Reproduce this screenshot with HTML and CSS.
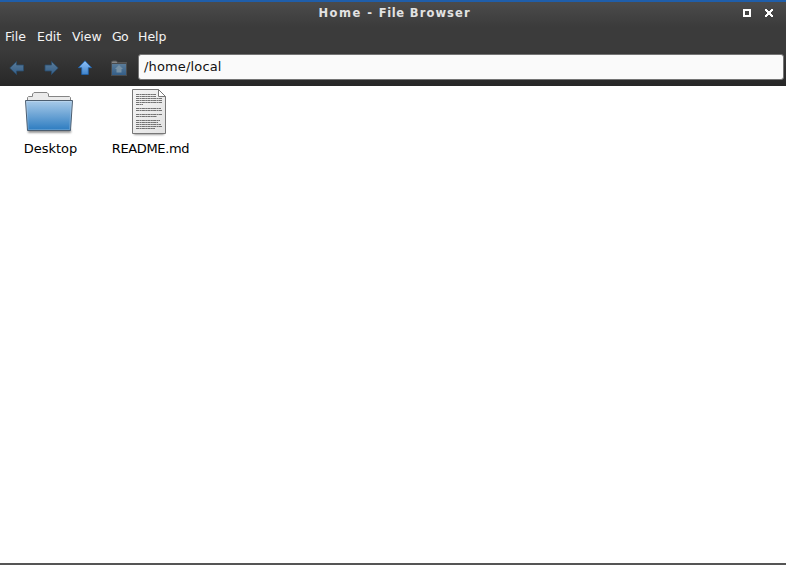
FILE: index.html
```html
<!DOCTYPE html>
<html lang="en">
<head>
<meta charset="utf-8">
<title>Home - File Browser</title>
<link rel="stylesheet" href="styles.css">
</head>
<body>
<div class="window">
  <div class="chrome">
    <header class="titlebar">
      <h1 class="title"><span class="place">Home -</span> <span class="kind">File</span> Browser</h1>
      <svg class="controls" width="30" height="8" viewBox="0 0 30 8" shape-rendering="crispEdges" fill="#fff">
        <path fill-rule="evenodd" d="M0 0h8v8H0zM2 2v4h4V2z"/>
        <path d="M22 0h2v1h1v1h2V1h1V0h2v2h-1v1h-1v2h1v1h1v2h-2V7h-1V6h-2v1h-1v1h-2V6h1V5h1V3h-1V2h-1z"/>
      </svg>
    </header>
    <nav class="menubar">
      <span class="m-file">File</span><span class="m-edit">Edit</span><span class="m-view">View</span><span class="m-go">Go</span><span class="m-help">Help</span>
    </nav>
    <div class="toolbar">
      <svg class="tools" width="130" height="20" viewBox="0 58 130 20">
        <defs>
          <linearGradient id="up" x2="0" y2="1"><stop offset="0" stop-color="#8fc2f8"/><stop offset="1" stop-color="#3f83cb"/></linearGradient>
          <linearGradient id="dim" x2="0" y2="1"><stop offset="0" stop-color="#5b7c99"/><stop offset="1" stop-color="#345e88"/></linearGradient>
        </defs>
        <path d="M9.800 68l6.700-6.500v3.500h7v6h-7v3.500z" fill="url(#dim)" stroke="#2a4c6c" stroke-width=".8"/>
        <path d="M58.200 68l-6.700-6.500v3.500h-6.500v6h6.500v3.500z" fill="url(#dim)" stroke="#2a4c6c" stroke-width=".8"/>
        <path d="M85 60.800l6.600 6.900h-3.300v6.800h-6.600v-6.800h-3.300z" fill="url(#up)" stroke="#1d63b0" stroke-width=".8"/>
        <path d="M111.500 75.500v-13.500l1-1h4l1 1.500h9v13z" fill="#858585" stroke="#555"/>
        <path d="M112 64h14v11h-14z" fill="url(#dim)"/>
        <path d="M111.500 63.500h15v12h-15z" fill="none" stroke="#494b4d"/>
        <path d="M119 65l4 4h-1.500v3.500h-5v-3.500H115z" fill="#7791a5"/>
      </svg>
      <div class="path">/home/local</div>
    </div>
  </div>
  <main class="files">
    <figure class="file desktop">
      <svg width="60" height="54" viewBox="20 86 60 54">
        <defs>
          <linearGradient id="blue" x2="0" y2="1"><stop offset="0" stop-color="#aacbe9"/><stop offset="1" stop-color="#2b7bc0"/></linearGradient>
          <filter id="soft" x="-10%" y="-200%" width="120%" height="500%"><feGaussianBlur stdDeviation="1"/></filter>
        </defs>
        <path d="M28 130h43v2.500H28z" fill="#777" filter="url(#soft)"/>
        <path d="M27.500 101v-3.500l1-1h4v-2.500l1.500-1.500h13l1.500 1.500v2.500H69.500l1 1V101z" fill="#ebebeb" stroke="#858585"/>
        <path d="M25.500 100.500h47l-2 30h-43z" fill="url(#blue)" stroke="#4c5d6f"/>
        <path d="M26.600 101.500h44.800l-1.800 28H28.400z" fill="none" stroke="#fff" stroke-opacity=".2"/>
      </svg>
      <figcaption>Desktop</figcaption>
    </figure>
    <figure class="file readme">
      <svg width="60" height="54" viewBox="120 86 60 54">
        <defs><linearGradient id="paper" x2="1" y2="1"><stop offset="0" stop-color="#f5f5f5"/><stop offset="1" stop-color="#e2e2e2"/></linearGradient></defs>
        <path d="M134 132h30v2.500h-30z" fill="#777" filter="url(#soft)"/>
        <path d="M132.500 89.500h26l7 7v37h-33z" fill="url(#paper)" stroke="#777"/>
        <path d="M158.500 89.500v7h7z" fill="#fff" stroke="#777"/>
        <g stroke="#555" stroke-width="1" stroke-dasharray="3.200 .4 1.800 .3" opacity=".8">
          <path d="M136 94.500h20M136 96.500h20M136 98.500h26M136 100.500h26M136 102.500h26M136 104.500h7M136 108.500h25M136 110.500h26M136 114.500h26M136 116.500h21M136 120.500h24M136 122.500h22M136 124.500h25M136 126.500h26M136 128.500h19"/>
        </g>
      </svg>
      <figcaption>README.md</figcaption>
    </figure>
  </main>
</div>
</body>
</html>
```
FILE: styles.css
```css
* { box-sizing: border-box; }
body { margin: 0; background: #fff; font: 13px/16px "DejaVu Sans", sans-serif; }
.window { height: 565px; display: flex; flex-direction: column; border-bottom: 2px solid #555; overflow: hidden; }
.chrome { height: 86px; border-top: 2px solid #1f5eaa; background: linear-gradient(#4b4b4b 0, #3b3b3b 25px, #3b3b3b 48px, #272727 84px); }
.titlebar { height: 24px; display: grid; grid-template-columns: 1fr auto; align-items: start; }
.title { grid-area: 1 / 1 / 2 / 3; margin: 3px 0 0 318.500px; font-size: 11.5px; line-height: 16px; letter-spacing: 1.1px; color: #e2e2e2; white-space: nowrap; }
.place { letter-spacing: 1.5px; }
.kind { letter-spacing: .6px; }
.controls { grid-area: 1 / 2; margin: 7px 13px 0 0; }
.menubar { height: 22px; padding: 3px 0 0 5px; display: flex; color: #f4f4f4; font-size: 12.5px; }
.m-file { width: 32px; }
.m-edit { width: 35px; }
.m-view { width: 40px; }
.m-go { width: 26px; letter-spacing: -.6px; }
.toolbar { height: 38px; display: flex; align-items: flex-start; padding: 6px 2px 0 0; }
.tools { margin: 4px 8px 0 0; }
.path { flex: 1; height: 26px; padding: 4px 5px; border: 1px solid #747474; border-radius: 3px; background: #fafafa; color: #111; letter-spacing: .15px; }
.files { flex: 1; display: flex; }
.file { margin: 0; width: 100px; }
.file svg { display: block; margin-left: 20px; }
figcaption { padding: 1px 0 0 1px; text-align: center; color: #000; white-space: nowrap; }
.readme figcaption { letter-spacing: -.35px; }
```
